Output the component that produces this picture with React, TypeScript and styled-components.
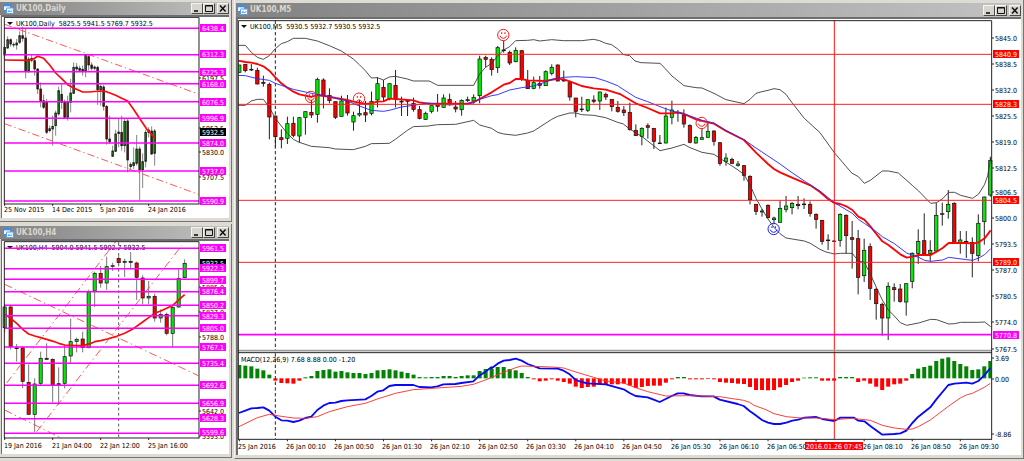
import React from "react";
import styled, { createGlobalStyle } from "styled-components";

const GlobalStyle = createGlobalStyle`
  body {
    margin: 0;
    background: #dedbd5;
    font-family: "DejaVu Sans Condensed", "DejaVu Sans", "Open Sans", sans-serif;
    font-stretch: condensed;
  }
  * { box-sizing: border-box; }
`;

/* ---------- window chrome ---------- */

const Desktop = styled.main`
  display: flex;
  align-items: flex-start;
  gap: 2px;
  min-height: 100vh;
`;

const SideColumn = styled.div`
  display: flex;
  flex-direction: column;
  flex: none;
  gap: 2px;
  width: 232px;
`;

const WindowFrame = styled.section<{ $main?: boolean }>`
  flex: ${(p) => (p.$main ? "1 1 0" : "none")};
  min-width: 0;
  padding: ${(p) => (p.$main ? "3px 2px 3px 1px" : "2px 2px 3px 0")};
  background: #dedbd5;
  border-right: 1px solid #77756f;
  border-bottom: 1px solid #77756f;
  border-left: ${(p) => (p.$main ? "1px solid #f4f3f0" : "0")};
`;

const TitleBar = styled.header<{ $main?: boolean }>`
  display: flex;
  align-items: center;
  gap: 2px;
  height: ${(p) => (p.$main ? "14px" : "13px")};
  padding: 0 0 0 ${(p) => (p.$main ? "1px" : "3px")};
  background: linear-gradient(to right, #828282, #c2c2c2);
`;

const Title = styled.h2`
  flex: 1;
  margin: 0;
  font-size: 8px;
  line-height: 12px;
  font-weight: bold;
  color: #dad7d0;
`;

const WindowButton = styled.button<{ $last?: boolean }>`
  display: flex;
  width: 12px;
  height: 11px;
  margin: 0 0 0 ${(p) => (p.$last ? "0" : "-2px")};
  padding: 0;
  background: #d8d5ce;
  border: 1px solid;
  border-color: #f6f5f2 #4c4a46 #4c4a46 #f6f5f2;
`;

const Client = styled.div<{ $main?: boolean }>`
  margin-left: ${(p) => (p.$main ? "0" : "1px")};
  background: #fff;
  border-top: 2px solid #6e6e6e;
  border-left: ${(p) => (p.$main ? "2px" : "1px")} solid #6e6e6e;
`;

const Chart = styled.svg`
  display: block;
  width: 100%;
  height: auto;
`;

const ChartText = styled.text<{ $light?: boolean }>`
  font-size: 7px;
  fill: ${(p) => (p.$light ? "#fff" : "#000")};
  white-space: pre;
`;

function AppIcon() {
  return (
    <svg width="11" height="10" viewBox="0 0 22 20" aria-hidden="true">
      <rect x="1" y="1" width="14" height="12" rx="1" fill="#e8f4ff" stroke="#3b8ee0" strokeWidth="2" />
      <path d="M1 3h14" stroke="#3b8ee0" strokeWidth="3" />
      <rect x="7" y="8" width="14" height="11" rx="1" fill="#e8f4ff" stroke="#5aa2e8" strokeWidth="2" />
      <path d="M10 16l2-3 3 3 3-3" stroke="#3b8ee0" strokeWidth="2" fill="none" />
    </svg>
  );
}

function WindowIcon({ kind }: { kind: "min" | "max" | "close" }) {
  return (
    <svg width="10" height="9" viewBox="0 0 10 9" fill="none" stroke="#111" aria-hidden="true">
      {kind === "min" && <path d="M2 7h4" strokeWidth="1.6" />}
      {kind === "max" && <path d="M1.5 7.5v-6h7v6zM1.5 2h7" />}
      {kind === "close" && <path d="M2 1.5l5.6 6M7.6 1.5l-5.6 6" strokeWidth="1.5" />}
    </svg>
  );
}

function ChartWindow({ title, main, children }: { title: string; main?: boolean; children: React.ReactNode }) {
  return (
    <WindowFrame $main={main} aria-label={title}>
      <TitleBar $main={main}>
        <AppIcon />
        <Title>{title}</Title>
        <WindowButton type="button" aria-label="Minimize"><WindowIcon kind="min" /></WindowButton>
        <WindowButton type="button" aria-label="Maximize"><WindowIcon kind="max" /></WindowButton>
        <WindowButton type="button" aria-label="Close" $last><WindowIcon kind="close" /></WindowButton>
      </TitleBar>
      <Client $main={main}>{children}</Client>
    </WindowFrame>
  );
}

/* ---------- chart parts ---------- */
/* Plot data is kept on a grid of three units to the pixel; Plot scales it down. */

type Candle = ["u" | "d", number, number, number, number]; // side, body top, body bottom, high, low
type Segment = [number, number, string]; // origin x, origin y, points

const Plot = ({ children }: { children: React.ReactNode }) => (
  <g transform="scale(0.33333)">{children}</g>
);

function Curve({ segments, color, width }: { segments: Segment[]; color: string; width: number }) {
  const points = segments
    .flatMap(([ox, oy, text]) =>
      text.split(" ").map((pair) => {
        const [x, y] = pair.split(",").map(Number);
        return `${x + ox},${y + oy}`;
      })
    )
    .join(" ");
  return <polyline points={points} fill="none" stroke={color} strokeWidth={width} strokeLinejoin="round" />;
}

function Candles({ data, start, step, body, up, down, wick }: {
  data: Candle[]; start: number; step: number; body: number; up: string; down: string; wick: string;
}) {
  return (
    <g>
      {data.map(([side, top, bottom, high, low], i) => {
        const x = start + step * i;
        return (
          <g key={i}>
            <path d={`M${x} ${high}V${low}`} stroke={wick} strokeWidth="3" />
            <rect
              x={x - body / 2}
              y={top}
              width={body}
              height={Math.max(bottom - top, 1)}
              fill={side === "u" ? up : down}
              stroke="#161616"
              strokeWidth="2.2"
            />
          </g>
        );
      })}
    </g>
  );
}

function Level({ y, x1, x2, color, width }: { y: number; x1: number; x2: number; color: string; width: number }) {
  return <path d={`M${x1} ${y}H${x2}`} stroke={color} strokeWidth={width} />;
}

function PriceTag({ x, y, text, color }: { x: number; y: number; text: string; color?: string }) {
  return (
    <g>
      {color ? (
        <rect x={x - 1} y={y - 4} width="26" height="8" fill={color} />
      ) : (
        <path d={`M${x - 2} ${y}h2`} stroke="#222" />
      )}
      <ChartText x={x + 1} y={y + 3} $light={!!color}>{text}</ChartText>
    </g>
  );
}

const Header = ({ x, y, text }: { x: number; y: number; text: string }) => (
  <g>
    <path d={`M${x} ${y - 4}h6l-3 3z`} fill="#111" />
    <ChartText x={x + 9} y={y}>{text}</ChartText>
  </g>
);

const MAGENTA = "#ff00ff";
const RED = "#ff0000";

/* ---------- UK100 Daily ---------- */

const dailyCandles: Candle[] = [
  ["u", 145, 168, 145, 185], ["u", 122, 147, 112, 150], ["d", 122, 135, 118, 143], ["u", 136, 138, 130, 145],
  ["u", 132, 138, 120, 152], ["u", 110, 130, 97, 135], ["d", 110, 118, 83, 128], ["d", 117, 216, 90, 238],
  ["u", 180, 216, 173, 222], ["u", 178, 184, 165, 190], ["d", 185, 210, 180, 230], ["d", 210, 270, 208, 285],
  ["d", 270, 305, 250, 325], ["d", 305, 325, 287, 330], ["d", 308, 400, 300, 405], ["u", 389, 395, 380, 400],
  ["u", 382, 390, 350, 440], ["u", 342, 380, 335, 410], ["u", 275, 345, 263, 350], ["d", 286, 310, 255, 330],
  ["d", 310, 355, 302, 357], ["u", 308, 355, 290, 365], ["u", 282, 310, 240, 340], ["u", 205, 283, 190, 285],
  ["d", 204, 210, 192, 220], ["u", 208, 214, 200, 218], ["d", 211, 216, 200, 230], ["u", 168, 216, 165, 235],
  ["d", 173, 198, 165, 215], ["d", 198, 208, 190, 215], ["u", 204, 208, 200, 215], ["d", 205, 272, 200, 318],
  ["u", 262, 272, 257, 320], ["d", 264, 322, 258, 335], ["d", 322, 420, 318, 437], ["d", 420, 428, 350, 434],
  ["u", 456, 472, 440, 473], ["u", 405, 457, 392, 458], ["u", 399, 404, 360, 445], ["d", 400, 440, 350, 455],
  ["u", 367, 440, 358, 460], ["d", 366, 483, 360, 520], ["u", 496, 503, 490, 510], ["u", 491, 500, 445, 510],
  ["u", 450, 493, 408, 500], ["d", 450, 512, 442, 605], ["u", 488, 512, 463, 567], ["u", 400, 487, 392, 505],
  ["d", 393, 400, 385, 415], ["d", 396, 465, 382, 468], ["u", 396, 463, 390, 500],
];
const dailyLevels = [88, 167, 218, 254, 308, 358, 432, 516, 606];
const dailyTags: [number, string, string?][] = [
  [79, "6197.5"], [129, "5952.5"], [153, "5830.0"], [178, "5707.5"],
  [29, "6438.4", MAGENTA], [55, "6312.3", MAGENTA], [73, "6225.3", MAGENTA], [85, "6168.0", MAGENTA],
  [103, "6076.5", MAGENTA], [119, "5996.9", MAGENTA], [133, "5932.5", "#000"], [144, "5874.0", MAGENTA],
  [172, "5737.0", MAGENTA], [202, "5590.9", MAGENTA],
];
const dailyDates: [number, string][] = [[4, "25 Nov 2015"], [52, "14 Dec 2015"], [100, "5 Jan 2016"], [148, "24 Jan 2016"]];

function DailyChart() {
  return (
    <Chart viewBox="2 18 227 201" role="img" aria-label="UK100 daily candles">
      <Header x={7} y={27} text="UK100,Daily  5825.5 5941.5 5769.7 5932.5" />
      <Plot>
        <Candles data={dailyCandles} start={14} step={9} body={5} up="#0a860a" down="#8a0000" wick="#858585" />
        <Curve segments={[[0, 0, "14,183 86,184 100,180 113,172 131,178 149,198 167,222 185,239 203,257 221,267 248,279 266,279 302,276 320,278 347,289 365,298 383,306 400,330 420,360 440,390 464,417"]]} color="#fa0a0a" width={5} />
        <path d="M14 76L595 285M14 374L595 586" stroke="#ff3c3c" strokeWidth="2.6" strokeDasharray="22 9 4 9" />
        {dailyLevels.map((y) => <Level key={y} y={y} x1={12} x2={597} color={MAGENTA} width={4.5} />)}
        <path d="M13 616V55H597V616M12 615H598M14 615v6M158 615v6M302 615v6M446 615v6" fill="none" stroke="#222" strokeWidth="3" />
      </Plot>
      {dailyTags.map(([y, text, color]) => <PriceTag key={text} x={201} y={y} text={text} color={color} />)}
      {dailyDates.map(([x, text]) => <ChartText key={text} x={x} y={213}>{text}</ChartText>)}
    </Chart>
  );
}

/* ---------- UK100 H4 ---------- */

const h4Candles: Candle[] = [
  ["u", 924, 986, 913, 1001], ["d", 924, 1043, 918, 1052], ["u", 1047, 1049, 1035, 1088], ["d", 1047, 1147, 1042, 1168],
  ["d", 1150, 1246, 1096, 1248], ["u", 1155, 1246, 1138, 1300], ["u", 1078, 1153, 1058, 1160], ["d", 1078, 1081, 1033, 1082],
  ["d", 1081, 1159, 1078, 1210], ["u", 1154, 1157, 1105, 1218], ["u", 1073, 1153, 1038, 1168], ["u", 1028, 1071, 959, 1092],
  ["u", 1021, 1027, 1016, 1060], ["d", 1020, 1046, 998, 1060], ["u", 879, 1046, 872, 1048], ["u", 823, 876, 818, 924],
  ["d", 823, 852, 801, 866], ["u", 803, 852, 773, 873], ["u", 800, 802, 791, 816], ["d", 778, 791, 769, 798],
  ["u", 787, 790, 779, 834], ["d", 787, 790, 759, 811], ["d", 792, 835, 788, 903], ["d", 837, 897, 829, 916],
  ["u", 892, 897, 846, 916], ["d", 892, 957, 884, 968], ["u", 946, 957, 931, 971], ["d", 946, 1003, 941, 1009],
  ["u", 925, 1003, 919, 1044], ["u", 838, 924, 811, 926], ["u", 793, 836, 781, 838],
];
const h4Levels = [748, 809, 841, 878, 919, 950, 988, 1044, 1093, 1159, 1213, 1259, 1303];
const h4Tags: [number, string, string?][] = [
  [288, "5885.0"], [313, "5837.0"], [338, "5788.0"], [412, "5642.0"], [437, "5593.0"],
  [264, "5932.5", "#000"], [249, "5961.5", MAGENTA], [269, "5922.3", MAGENTA], [281, "5899.7", MAGENTA],
  [292, "5876.4", MAGENTA], [306, "5850.2", MAGENTA], [317, "5829.3", MAGENTA], [329, "5805.0", MAGENTA],
  [348, "5767.1", MAGENTA], [364, "5735.4", MAGENTA], [386, "5692.6", MAGENTA], [404, "5656.9", MAGENTA],
  [419, "5628.3", MAGENTA], [433, "5599.6", MAGENTA],
];
const h4Dates: [number, string][] = [[4, "19 Jan 2016"], [52, "21 Jan 04:00"], [100, "22 Jan 12:00"], [148, "25 Jan 16:00"]];

function H4Chart() {
  return (
    <Chart viewBox="2 242 227 213" role="img" aria-label="UK100 four hour candles">
      <Header x={7} y={251} text="UK100,H4  5904.0 5941.5 5902.7 5932.5" />
      <Plot>
        <path d="M356 730V1317" stroke="#333" strokeWidth="2.5" strokeDasharray="8 8" />
        <Candles data={h4Candles} start={14} step={18} body={9.5} up="#00ec00" down="#f60000" wick="#777" />
        <Curve segments={[[0, 0, "14,946 32,958 50,973 68,991 86,1005 104,1011 122,1016 140,1021 160,1027 176,1033 194,1038 230,1040 248,1040 270,1034 284,1028 302,1025 322,1020 350,1012 374,1003 400,989 428,969 446,956 464,943 482,936 500,928 518,919 536,903 554,887"]]} color="#fa0a0a" width={5} />
        <path d="M20 1152L347 728M110 1298L545 740M14 856L595 1130M14 1233L185 1318" fill="none" stroke="#ff3c3c" strokeWidth="2.6" strokeDasharray="24 10 4 10" />
        {h4Levels.map((y) => <Level key={y} y={y} x1={12} x2={597} color={MAGENTA} width={4.5} />)}
        <path d="M13 1318V728H597V1318M12 1317H598M14 1317v6M158 1317v6M302 1317v6M446 1317v6" fill="none" stroke="#222" strokeWidth="3" />
      </Plot>
      {h4Tags.map(([y, text, color]) => <PriceTag key={text} x={201} y={y} text={text} color={color} />)}
      {h4Dates.map(([x, text]) => <ChartText key={text} x={x} y={449}>{text}</ChartText>)}
    </Chart>
  );
}

/* ---------- UK100 M5 with MACD ---------- */

const m5Candles: Candle[] = [
  ["u", 195, 217, 195, 218], ["d", 193, 212, 192, 217], ["u", 208, 210, 192, 213], ["d", 211, 252, 203, 253],
  ["d", 247, 250, 227, 260], ["d", 253, 351, 248, 418], ["d", 348, 410, 347, 442], ["d", 413, 419, 388, 445],
  ["u", 371, 415, 350, 432], ["d", 370, 406, 350, 412], ["u", 353, 408, 351, 428], ["u", 335, 352, 334, 404],
  ["d", 337, 345, 300, 354], ["u", 238, 343, 233, 368], ["d", 240, 286, 235, 325], ["d", 286, 302, 265, 310],
  ["d", 305, 352, 305, 357], ["u", 303, 349, 287, 350], ["d", 303, 339, 285, 347], ["u", 347, 366, 335, 392],
  ["u", 340, 345, 300, 350], ["d", 338, 345, 303, 366], ["u", 304, 340, 275, 346], ["u", 251, 300, 232, 322],
  ["d", 262, 291, 240, 305], ["u", 251, 296, 250, 301], ["d", 256, 296, 210, 322], ["u", 304, 306, 290, 348],
  ["d", 302, 304, 300, 348], ["d", 310, 328, 293, 335], ["d", 329, 355, 318, 358], ["u", 340, 358, 335, 360],
  ["u", 317, 334, 317, 340], ["d", 311, 319, 282, 335], ["u", 294, 322, 283, 322], ["d", 298, 312, 281, 317],
  ["d", 321, 327, 303, 337], ["u", 301, 329, 298, 347], ["u", 299, 302, 290, 306], ["u", 292, 303, 283, 311],
  ["u", 177, 287, 167, 310], ["d", 172, 178, 167, 202], ["d", 178, 209, 172, 227], ["u", 143, 203, 138, 219],
  ["u", 150, 152, 122, 158], ["d", 157, 189, 152, 195], ["u", 151, 185, 142, 187], ["d", 152, 235, 150, 243],
  ["d", 241, 266, 210, 267], ["u", 248, 265, 230, 268], ["d", 250, 256, 228, 266], ["u", 215, 257, 211, 258],
  ["u", 202, 220, 193, 226], ["d", 195, 243, 193, 244], ["d", 240, 243, 212, 245], ["d", 248, 291, 243, 302],
  ["d", 294, 334, 294, 352], ["u", 327, 329, 290, 336], ["u", 299, 331, 297, 336], ["d", 300, 304, 286, 310],
  ["u", 276, 303, 275, 330], ["d", 283, 291, 278, 300], ["d", 298, 320, 298, 334], ["d", 322, 334, 303, 338],
  ["d", 330, 338, 318, 348], ["d", 337, 389, 308, 392], ["d", 391, 407, 373, 407], ["u", 385, 409, 382, 436],
  ["d", 377, 382, 370, 416], ["d", 385, 424, 384, 447], ["u", 429, 431, 405, 431], ["u", 348, 429, 323, 430],
  ["u", 330, 352, 302, 373], ["u", 337, 339, 330, 365], ["d", 345, 372, 328, 383], ["d", 376, 427, 373, 430],
  ["u", 412, 429, 408, 431], ["u", 413, 418, 385, 418], ["u", 394, 412, 365, 413], ["d", 393, 424, 391, 437],
  ["d", 428, 490, 426, 497], ["u", 474, 484, 460, 497], ["d", 478, 490, 473, 492], ["u", 492, 496, 483, 500],
  ["d", 497, 526, 495, 542], ["d", 529, 599, 526, 613], ["d", 613, 634, 612, 645], ["u", 633, 636, 627, 650],
  ["d", 616, 653, 613, 655], ["u", 654, 659, 650, 673], ["u", 625, 667, 601, 668], ["u", 618, 628, 588, 637],
  ["u", 610, 623, 606, 643], ["d", 613, 617, 588, 628], ["u", 612, 614, 595, 627], ["d", 613, 640, 604, 650],
  ["d", 643, 658, 640, 686], ["d", 661, 724, 660, 734], ["u", 720, 722, 703, 750], ["d", 723, 724, 720, 726],
  ["u", 643, 721, 640, 740], ["d", 646, 707, 643, 760], ["d", 713, 718, 663, 806], ["d", 716, 832, 690, 883],
  ["u", 751, 827, 716, 846], ["d", 740, 865, 730, 900], ["d", 868, 911, 863, 959], ["d", 913, 954, 908, 1007],
  ["u", 859, 954, 847, 1020], ["d", 863, 869, 850, 905], ["d", 867, 904, 852, 908], ["u", 851, 906, 850, 947],
  ["u", 760, 844, 757, 865], ["u", 724, 760, 688, 792], ["d", 722, 762, 640, 765], ["u", 751, 760, 721, 784],
  ["u", 646, 753, 608, 756], ["u", 641, 643, 608, 677], ["u", 613, 635, 570, 656], ["d", 610, 727, 607, 732],
  ["u", 720, 730, 693, 761], ["u", 724, 726, 693, 774], ["d", 727, 760, 712, 832], ["u", 670, 767, 643, 784],
  ["u", 591, 665, 590, 734], ["u", 481, 585, 470, 590],
];

const upperBand: Segment[] = [
  [690, 0, "25,136 46,136 64,157 82,172 100,178 118,167 136,146 154,131 172,125 190,115 226,115 262,123 298,137 334,153 370,177 388,194 406,212 424,234 442,233 460,240 478,231 496,229 514,233 532,237 550,243 597,243"],
  [1290, 0, "0,244 23,256 131,256 149,222 167,202 185,190 203,168 221,150 239,140 257,122 293,121 311,119 329,123 347,121 365,119 401,122 455,122 491,118 509,122 527,130 545,134 563,147 581,164 599,167"],
  [1860, 180, "45,3 63,8 120,10 137,27 156,48 192,77 228,83 246,84 282,100 318,119 372,131 390,118 408,100 426,95 444,91 462,86 480,89 498,103 516,128 553,175 600,218"],
  [2460, 0, "43,458 95,519 115,530 133,550"],
  [2460, 510, "151,31 187,3 205,3 235,9 278,47 296,63 332,100 350,98 368,86 386,67 404,67 422,76 458,85 476,72 494,43 503,17 512,-35"],
];
const lowerBand: Segment[] = [
  [690, 0, "25,316 46,316 64,303 82,298 100,298 118,322 136,355 154,378 172,400 190,418 208,427 244,439 298,443 316,447 370,449 406,439 424,431 478,430 496,418 532,391 550,380 597,378"],
  [1290, 0, "0,377 23,374 77,373 131,361 149,375 185,385 203,397 221,402 257,406 293,399 311,393 365,358 383,349 419,339 437,339 455,344 491,346 527,353 563,367"],
  [1860, 180, "10,192 29,207 65,229 101,257 120,272 138,268 156,264 192,253 210,263 246,277 282,283 300,295 336,318 354,330 372,343 390,375 408,415 426,447 444,477 462,502 480,521 498,534 553,543 571,550"],
  [2460, 510, "0,238 18,246 43,252 61,250 97,250 115,273 133,277 151,312 169,352 187,390 205,420 223,438 241,458 260,466 296,459 332,448 350,449 386,462 404,461 422,457 476,457 494,456 512,470"],
];
const slowAverage: Segment[] = [
  [690, 0, "25,226 46,227 82,236 118,241 136,250 154,256 190,268 244,280 298,290 352,303 388,318 424,331 460,334 478,331 514,321 550,316 597,309"],
  [1290, 0, "0,310 60,315 95,312 113,312 131,308 149,298 185,287 203,284 239,270 275,263 311,258 347,246 365,238 401,232 437,230 495,233 527,243 563,257"],
  [1860, 180, "0,82 47,112 83,125 120,140 156,153 192,161 246,181 282,189 318,211 372,239 408,264 444,288 480,312 516,338 553,363"],
  [2460, 510, "0,63 43,98 97,130 115,148 133,160 169,185 187,200 223,221 260,249 278,256 296,262 314,271 332,274 368,270 386,262 440,269 458,271 476,264 494,254 512,236"],
];
const fastAverage: Segment[] = [
  [690, 0, "25,182 46,186 64,188 82,192 100,199 118,212 136,232 154,250 172,263 190,275 208,283 226,287 244,291 262,285 280,288 298,290 316,294 352,300 370,305 388,308 406,312 424,310 442,305 460,304 478,296 496,297 550,301 568,307 597,311"],
  [1290, 0, "0,311 41,311 113,311 131,306 149,297 185,277 221,254 239,249 257,237 275,237 293,241 347,243 383,236 401,238 419,244 437,251 455,258 491,265 527,269 563,280"],
  [1860, 180, "0,102 47,130 83,144 120,160 156,160 174,157 192,162 228,178 264,187 282,191 318,213 372,240 408,278 444,312 462,327 480,337 516,353 571,376"],
  [2460, 510, "0,66 25,88 43,99 61,102 79,109 97,120 115,140 133,149 151,169 187,214 205,225 241,253 260,263 278,260 296,255 332,255 350,245 368,234 386,219 440,219 458,221 476,217 494,205 512,181"],
];

const histogram = [
  40, 38, 36, 29, 24, 11, -7, -14, -15, -16, -7, 3, 7, 22, 25, 27, 20, 22, 18, 16, 16, 13, 16, 24, 25, 27, 24, 20, 16, 11, 4, 3,
  4, 4, 7, 7, 4, 7, 9, 9, 22, 28, 28, 34, 34, 28, 24, 16, 4, -3, -9, -7, -3, -7, -11, -16, -25, -29, -26, -25, -18, -18, -18, -18,
  -16, -22, -29, -26, -23, -22, -22, -13, -3, 4, 4, -3, -3, -3, -2, -3, -11, -13, -14, -16, -17, -26, -35, -35, -36, -35, -27, -20,
  -11, -7, 2, 3, 3, -7, -7, -7, 4, 4, 4, -11, -7, -16, -25, -35, -25, -18, -16, -7, 13, 29, 34, 38, 52, 59, 63, 52, 43, 36, 25, 27, 36, 52,
];
const macdLine: Segment[] = [
  [690, 1020, "27,219 46,212 64,205 82,204 100,202 118,212 136,230 154,241 172,242 190,246 208,242 226,234 244,230 262,210 280,197 298,189 316,188 334,183 352,181 406,178 424,168 442,155 460,151 478,138 496,135 550,135 568,141 604,142 622,139 640,133 676,132 694,129 730,124 748,107 766,95 784,82"],
  [1470, 1020, "5,85 23,71 41,62 59,60 77,56 95,62 113,72 149,85 203,86 221,92 239,103 257,120 275,126 293,130 347,133 401,148 419,159 437,168 473,172 491,179 509,186 527,177 545,168 563,160 581,160 599,165 635,169 671,169 689,179 743,192 761,198 779,213"],
  [2262, 1020, "0,222 24,240 42,248 60,252 78,252 97,248 115,242 133,239 151,233 187,231 205,237 241,243 259,233 300,233 313,242 331,244 349,258 385,284 421,282 439,280 457,272 475,249 493,230 529,202 547,178 583,135 601,131 637,128 655,131 673,123 691,106 709,84"],
];
const signalLine: Segment[] = [
  [690, 1020, "27,260 82,233 118,223 154,229 190,234 226,235 262,230 298,215 352,200 406,190 442,177 496,160 550,149 622,144 694,139 730,133 766,120"],
  [1470, 1020, "5,112 41,97 77,83 95,78 185,81 221,84 257,96 311,112 347,123 401,129 437,143 473,155 527,168 600,167 689,170 761,181 779,187"],
  [2262, 1020, "0,196 36,209 60,221 97,230 140,234 187,234 241,239 295,235 349,241 385,256 421,264 457,268 475,267 493,260 529,240 583,199 619,174 637,165 655,160 691,142 709,130"],
];

const m5Tags: [number, string, string?][] = [
  [38, "5845.0"], [64, "5838.5"], [90, "5832.0"], [116, "5825.5"], [142, "5819.0"], [168, "5812.5"], [192, "5806.5"],
  [218, "5800.0"], [244, "5793.5"], [270, "5787.0"], [296, "5780.5"], [322, "5774.0"], [349, "5767.5"],
  [358, "3.69"], [379, "0.00"], [434, "-8.86"],
  [54, "5840.9", RED], [104, "5828.3", RED], [200, "5804.5", RED], [262, "5789.0", RED], [335, "5770.8", MAGENTA],
];
const m5Times = [
  "25 Jan 2016", "26 Jan 00:10", "26 Jan 00:50", "26 Jan 01:30", "26 Jan 02:10", "26 Jan 02:50", "26 Jan 03:30", "26 Jan 04:10",
  "26 Jan 04:50", "26 Jan 05:30", "26 Jan 06:10", "26 Jan 06:50", "", "26 Jan 08:10", "26 Jan 08:50", "26 Jan 09:30",
];
const FIRST_BAR = 718;
const BAR_STEP = 18.024;

function Face({ x, y, color, sad }: { x: number; y: number; color: string; sad?: boolean }) {
  return (
    <g transform={`translate(${x} ${y})`} fill="none" stroke={color} strokeWidth="3">
      <circle r="17" />
      <path d={sad ? "M-9 10Q0 -3 9 10" : "M-10 2Q-8 10 0 10T10 2"} />
      <path d="M-5 -8v5M5 -8v5" strokeWidth="3.4" />
    </g>
  );
}

function M5Chart() {
  return (
    <Chart viewBox="238 19 783 436" role="img" aria-label="UK100 five minute candles with MACD">
      <Plot>
        <path d="M826 62V1050M826 1060V1317" stroke="#222" strokeWidth="3" strokeDasharray="10 7" />
        <Candles data={m5Candles} start={FIRST_BAR} step={BAR_STEP} body={10} up="#00ec00" down="#f60000" wick="#222" />
        <Curve segments={upperBand} color="#333" width={2.6} />
        <Curve segments={lowerBand} color="#333" width={2.6} />
        <Curve segments={fastAverage} color="#fa0505" width={5.5} />
        <Curve segments={slowAverage} color="#2a2aff" width={2.8} />
        {[163, 313, 601, 787].map((y) => <Level key={y} y={y} x1={714} x2={2975} color="#ff2020" width={3} />)}
        <Level y={1004} x1={714} x2={2975} color={MAGENTA} width={5} />
        <Face x={1510} y={105} color="#f42020" />
        <Face x={933} y={291} color="#f42020" />
        <Face x={1077} y={296} color="#f42020" sad />
        <Face x={2105} y={369} color="#f42020" />
        <Face x={2321} y={687} color="#2020f4" />
        {histogram.map((v, i) => (
          <rect
            key={i}
            x={Math.max(FIRST_BAR + BAR_STEP * i - 6, 715)}
            y={v > 0 ? 1135 - v : 1135}
            width={i === 0 || i === 125 ? 9 : 12}
            height={Math.abs(v)}
            fill={v > 0 ? "#058205" : "#ff0000"}
          />
        ))}
        <Curve segments={macdLine} color="#0808f5" width={5.5} />
        <Curve segments={signalLine} color="#ff3030" width={2.8} />
        <path d="M2503 62V1317" stroke="#ff1010" strokeWidth="3" />
        <path d="M714 1052H2976" stroke="#9b9b9b" strokeWidth="5" />
        <path d="M715 1318V62H2975V1318M714 1058H2976M714 1318H2976" fill="none" stroke="#222" strokeWidth="3" />
        {m5Times.map((_, i) => (
          <path key={i} d={`M${FIRST_BAR + BAR_STEP * 8 * i} 1318v6`} stroke="#222" strokeWidth="3" />
        ))}
      </Plot>
      <Header x={241} y={29} text="UK100,M5  5930.5 5932.7 5930.5 5932.5" />
      <ChartText x={241} y={362}>MACD(12,26,9) 7.68 8.88 0.00 -1.20</ChartText>
      {m5Tags.map(([y, text, color]) => <PriceTag key={text} x={994} y={y} text={text} color={color} />)}
      {m5Times.map((text, i) => text && (
        <ChartText key={text} x={238 + Math.round(i * 48.06)} y={449}>{text}</ChartText>
      ))}
      <rect x="805" y="442" width="58" height="8" fill={RED} />
      <ChartText x={806} y={449} $light>2016.01.26 07:45</ChartText>
    </Chart>
  );
}

export default function App() {
  return (
    <>
      <GlobalStyle />
      <Desktop>
        <SideColumn>
          <ChartWindow title="UK100,Daily"><DailyChart /></ChartWindow>
          <ChartWindow title="UK100,H4"><H4Chart /></ChartWindow>
        </SideColumn>
        <ChartWindow title="UK100,M5" main><M5Chart /></ChartWindow>
      </Desktop>
    </>
  );
}
